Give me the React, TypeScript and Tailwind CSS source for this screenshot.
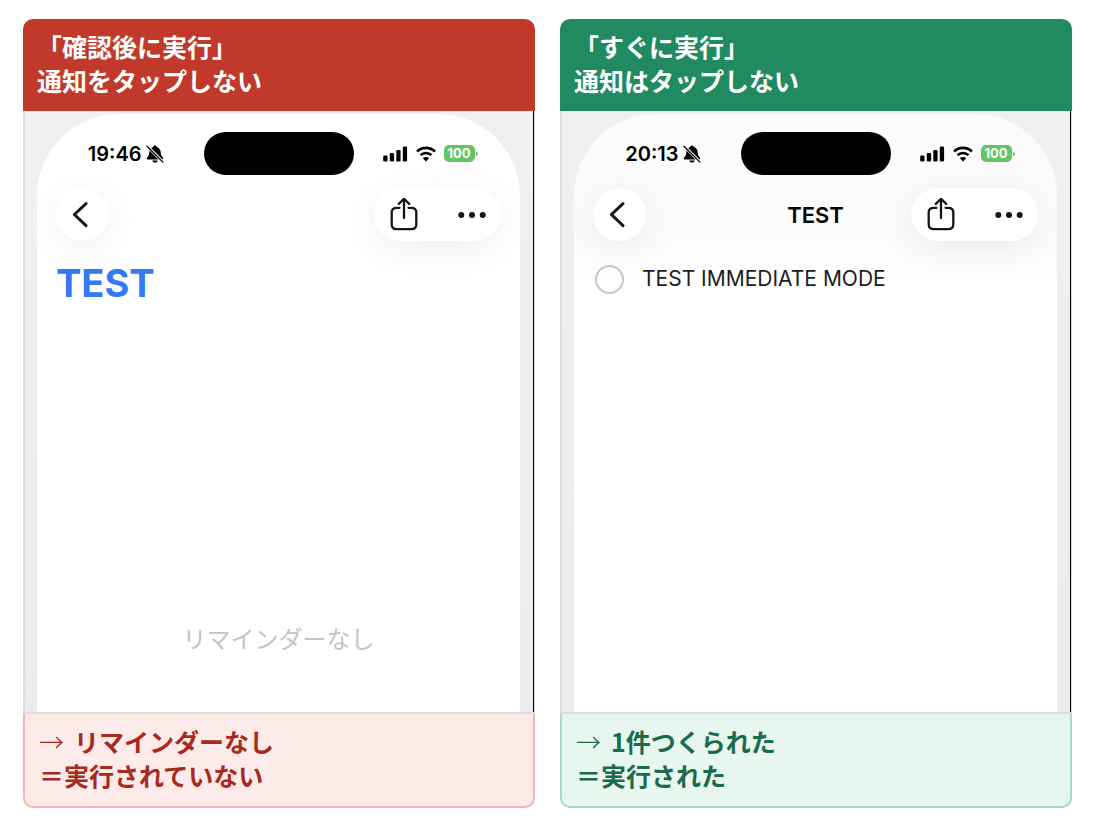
import { ReactNode } from 'react'
import clsx from 'clsx'

type Tone = 'red' | 'green'

interface PhonePanelProps {
  children: ReactNode
  heading: string[]
  navTitle?: string
  result: string[]
  time: string
  tone: Tone
}

function BellOffIcon() {
  return (
    <svg aria-hidden="true" className="h-[18px] w-[18px]" viewBox="0 0 18 18">
      <path
        d="M9 .5c-1 0-1.700.6-1.800 1.400C4.800 2.600 3.400 4.600 3.300 7c-.1 2.700-.6 3.700-1.700 4.900-.5.6-.8 1-.8 1.500 0 .7.5 1.200 1.300 1.200h13.800c.8 0 1.300-.5 1.300-1.200 0-.5-.3-.9-.8-1.500-1.100-1.200-1.600-2.200-1.700-4.900-.1-2.400-1.500-4.400-3.900-5.100C10.700 1.100 10 .5 9 .5Z"
        fill="#000"
      />
      <path d="M6.300 15.400h5.400c-.3 1.400-1.300 2.200-2.700 2.200s-2.400-.8-2.700-2.200Z" fill="#000" />
      <path d="M1 1 17 17" stroke="#fff" strokeWidth="3" />
      <path d="M1 1.200 16.900 17.100" stroke="#000" strokeLinecap="round" strokeWidth="1.300" />
    </svg>
  )
}

function SignalIcon() {
  return (
    <svg aria-hidden="true" className="h-4 w-[25px]" viewBox="0 0 25 16">
      <rect height="6" rx="1.300" width="4.300" x="0.200" y="9.500" />
      <rect height="8.500" rx="1.300" width="4.300" x="6.800" y="7" />
      <rect height="11.500" rx="1.300" width="4.300" x="13.300" y="4" />
      <rect height="15" rx="1.300" width="4.300" x="19.800" y="0.500" />
    </svg>
  )
}

function WifiIcon() {
  return (
    <svg aria-hidden="true" className="h-4 w-5" fill="none" viewBox="0 0 20 16">
      <path d="M1.100 5.500c5-4.800 12.800-4.800 17.800 0" stroke="#000" strokeWidth="2.700" />
      <path d="M4.500 9.100c3.100-2.900 7.900-2.900 11 0" stroke="#000" strokeWidth="2.600" />
      <path d="M10 15.400 6.700 12.100c1.800-1.600 4.800-1.600 6.600 0Z" fill="#000" />
    </svg>
  )
}

function Battery() {
  return (
    <div className="flex items-center gap-px">
      <span className="flex h-[17px] w-[31px] items-center justify-center rounded-[5px] bg-[#65c466] text-[13px] leading-none font-bold text-white">
        100
      </span>
      <span className="h-1 w-0.5 rounded-r-full bg-[#65c466]" />
    </div>
  )
}

function BackIcon() {
  return (
    <svg aria-hidden="true" className="h-[26px] w-4" fill="none" viewBox="0 0 16 26">
      <path
        d="M14 1.600 2.400 12.500 14 23.600"
        stroke="#161616"
        strokeLinecap="round"
        strokeLinejoin="round"
        strokeWidth="3"
      />
    </svg>
  )
}

function ShareIcon() {
  return (
    <svg
      aria-hidden="true"
      className="h-[34px] w-7"
      fill="none"
      stroke="#161616"
      strokeLinecap="round"
      strokeWidth="2.300"
      viewBox="0 0 28 34"
    >
      <path d="M9.500 9.800H6.700c-3.100 0-5 1.700-5 4.700v11.700c0 3.100 1.900 4.900 5 4.900h14.600c3.100 0 5-1.800 5-4.900V14.500c0-3-1.900-4.700-5-4.700h-2.800" />
      <path d="M14 20V1" />
      <path d="M8.800 5.900 14 .8l5.200 5.100" strokeLinejoin="round" />
    </svg>
  )
}

function MoreIcon() {
  return (
    <svg aria-hidden="true" className="h-[6px] w-7" fill="#161616" viewBox="0 0 28 6">
      <circle cx="3.300" cy="3" r="3" />
      <circle cx="14" cy="3" r="3" />
      <circle cx="24.700" cy="3" r="3" />
    </svg>
  )
}

function PhonePanel({ children, heading, navTitle, result, time, tone }: PhonePanelProps) {
  return (
    <section className="min-w-0 text-[25px] leading-[34px] font-bold">
      <h2
        className={clsx(
          'rounded-t-[10px] px-[14px] pt-[10px] pb-[14px] text-white',
          tone === 'red' ? 'bg-[#c0392b]' : 'bg-[#218a60]',
        )}
      >
        {heading.map(line => (
          <span className="block" key={line}>
            {line}
          </span>
        ))}
      </h2>

      <div className="border-r border-b-2 border-l-2 border-[#dddddd] font-[Inter,'Noto_Sans_CJK_JP',sans-serif] font-normal">
        <div className="border-r border-black bg-linear-to-b from-[#eff0f2] to-[#ebecee] pt-[3px] pr-[13px] pl-3">
          <div
            className={clsx(
              'flex min-h-[598px] flex-col overflow-hidden rounded-t-[82px]',
              navTitle ? 'bg-linear-to-b from-[#fbfbfb] from-20% to-white to-30%' : 'bg-white',
            )}
          >
            <div className="grid grid-cols-[1fr_150px_1fr] items-center pt-[18px]">
              <div className="flex items-center justify-end gap-1 pr-10">
                <time className="text-xl leading-6 font-semibold">{time}</time>
                <BellOffIcon />
              </div>
              <div className="h-[43px] rounded-full bg-black" />
              <div className="flex items-center gap-2 pl-[29px]">
                <SignalIcon />
                <WifiIcon />
                <Battery />
              </div>
            </div>

            <div className="mt-[13px] grid grid-cols-[1fr_auto_1fr] items-center px-[19px]">
              <button
                aria-label="戻る"
                className="flex size-[53px] items-center rounded-full bg-white pl-4 shadow-[0_8px_40px_rgba(0,0,0,0.07)]"
                type="button"
              >
                <BackIcon />
              </button>
              <h3 className="text-[22px] font-semibold">{navTitle}</h3>
              <div className="flex h-[53px] items-center gap-10 justify-self-end rounded-full bg-white pr-[15px] pl-4 shadow-[0_8px_40px_rgba(0,0,0,0.07)]">
                <button aria-label="共有" type="button">
                  <ShareIcon />
                </button>
                <button aria-label="その他" type="button">
                  <MoreIcon />
                </button>
              </div>
            </div>

            {children}
          </div>
        </div>
      </div>

      <div
        className={clsx(
          'rounded-b-[10px] border-2 border-t-0 px-[14px] pt-[10px] pb-[14px]',
          tone === 'red'
            ? 'border-[#f3b5af] bg-[#fdebe9] text-[#a82a1e]'
            : 'border-[#a5dcc6] bg-[#e7f6ef] text-[#1a6b4b]',
        )}
      >
        <p className="flex gap-[10px]">
          <span className="font-light">→</span>
          {result[0]}
        </p>
        <p>{result[1]}</p>
      </div>
    </section>
  )
}

export default function App() {
  return (
    <main className="grid grid-cols-2 gap-[25px] bg-white pt-[19px] pr-12 pb-[14px] pl-[23px] font-['Noto_Sans_CJK_JP',sans-serif]">
      <PhonePanel
        heading={['「確認後に実行」', '通知をタップしない']}
        result={['リマインダーなし', '＝実行されていない']}
        time="19:46"
        tone="red"
      >
        <h3 className="mt-[18px] px-[19px] text-[38px] leading-[48px] font-bold text-[#3478f6]">TEST</h3>
        <p className="mt-auto pb-14 text-center text-2xl text-[#c5c5c7]">リマインダーなし</p>
      </PhonePanel>

      <PhonePanel
        heading={['「すぐに実行」', '通知はタップしない']}
        navTitle="TEST"
        result={['1件つくられた', '＝実行された']}
        time="20:13"
        tone="green"
      >
        <label className="mt-[21px] flex items-center gap-[18px] px-[21px] text-[21px] text-[#1c1c1e]">
          <input
            className="size-[29px] appearance-none rounded-full border-2 border-[#c7c7c9] checked:bg-[#3478f6]"
            type="checkbox"
          />
          TEST IMMEDIATE MODE
        </label>
      </PhonePanel>
    </main>
  )
}
